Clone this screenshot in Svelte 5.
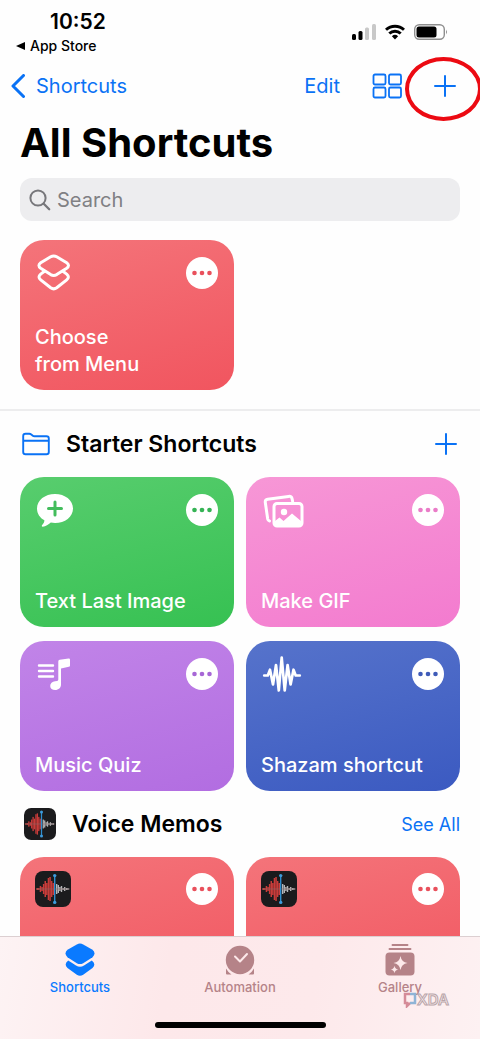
<script lang="ts">
    type Shortcut = { name: string; icon: string; color: string };

    const recent: Shortcut[] = [
        { name: "Choose\nfrom Menu", icon: "layers", color: "red" },
    ];

    const starters: Shortcut[] = [
        { name: "Text Last Image", icon: "bubble", color: "green" },
        { name: "Make GIF", icon: "photos", color: "pink" },
        { name: "Music Quiz", icon: "music", color: "purple" },
        { name: "Shazam shortcut", icon: "wave", color: "blue" },
    ];

    const memos: Shortcut[] = [
        { name: "", icon: "memo", color: "red" },
        { name: "", icon: "memo", color: "red" },
    ];

    // half heights of the recording bars, left to right
    const PLAYED = [1, 1, 3, 2, 5, 8, 6, 11, 12, 8, 6];
    const UNPLAYED = [5, 4, 2, 3, 1, 2, 1, 1];

    let search = $state("");
</script>

{#snippet memoIcon(size: number)}
    <svg width={size} height={size} viewBox="0 0 36 36" aria-hidden="true">
        <rect width="36" height="36" rx="8" fill="#1b1b1d" />
        {#each PLAYED as h, i}
            <rect x={1.5 + i * 1.6} y={18 - h} width="1.5" height={h * 2} fill="#c93c3a" />
        {/each}
        {#each UNPLAYED as h, i}
            <rect x={21 + i * 1.6} y={18 - h} width="1.4" height={h * 2} fill="#b5b5b7" />
        {/each}
        <path d="M1 18h34" stroke="#8c6a6a" stroke-width="0.6" />
        <path d="M19.7 4.5v27" stroke="#2f8fd0" stroke-width="1.4" />
        <circle cx="19.7" cy="4.6" r="1.7" fill="#3d9bdc" />
        <circle cx="19.7" cy="31.4" r="1.7" fill="#3d9bdc" />
    </svg>
{/snippet}

{#snippet plusIcon()}
    <svg width="22" height="22" viewBox="0 0 22 22" fill="none" stroke="currentColor" stroke-width="2" stroke-linecap="round" aria-hidden="true">
        <path d="M11 1v20M1 11h20" />
    </svg>
{/snippet}

{#snippet card(item: Shortcut)}
    <article class="card {item.color}">
        <div class="card-top">
            {#if item.icon === "memo"}
                {@render memoIcon(36)}
            {:else}
                <svg width="44" height="38" viewBox="0 0 44 38" fill="none" aria-hidden="true">
                    {#if item.icon === "layers"}
                        <g stroke="#fff" stroke-width="3" stroke-linejoin="round" stroke-linecap="round">
                            <path d="M15.700 2.800q3-1.700 6 0l10 6q3.600 2.700 0 5.400l-10 6.400q-3 1.700-6 0l-10-6.400q-3.600-2.700 0-5.400z" />
                            <path d="M9.500 17.300l-3.800 2.800q-3.400 3 0 5.800l10 7.900q3 2.200 6 0l10-7.900q3.400-2.800 0-5.800l-3.800-2.800" />
                        </g>
                    {:else if item.icon === "bubble"}
                        <path d="M20 3c10 0 18 6.200 18 14.400S30 32 20 32c-1.500 0-2.900-.1-4.200-.4-2.400 2.200-5.100 4-8 4.100-1.200 0-1.300-1-.6-1.700 1.400-1.500 2.200-3 2.200-4.700C4.900 26.700 2 22.500 2 17.400 2 9.200 10 3 20 3z" fill="#fff" />
                        <path d="M20 11v13M13.500 17.500h13" stroke="#43bd5c" stroke-width="3" stroke-linecap="round" />
                    {:else if item.icon === "photos"}
                        <path d="M8.500 30q-1.500-.3-1.800-2L4.300 11.500q-.4-2.800 2.400-3.200L27.500 5.400q3-.4 3.600 2.400l.5 2.500" stroke="#fff" stroke-width="3" stroke-linecap="round" />
                        <rect x="13" y="12.500" width="28" height="22.500" rx="3" stroke="#fff" stroke-width="3" />
                        <circle cx="23" cy="21" r="3.200" fill="#fff" />
                        <path d="M14 30l4.500-3.500 4 3.500 8.500-7.500 9 7.500v5H14z" fill="#fff" />
                    {:else if item.icon === "music"}
                        <path d="M4 10.500h14M4 16h14M4 21.500h14" stroke="#fff" stroke-width="2.400" stroke-linecap="round" />
                        <path d="M23.300 6.600q0-1.500 1.400-1.800L33.600 3.600q1.400-.2 1.400 1.200v5.600q0 1.200-1.200 1.400l-7.800 1.700V29.500c0 3.200-2.400 5.500-5.800 5.500-3 0-5-1.700-5-4.100 0-2.600 2-4.200 4.900-4.700l2-.3q1.200-.2 1.200-1.400z" fill="#fff" />
                    {:else if item.icon === "wave"}
                        <path d="M3.200 20.500h3.600L9 14.700 12 29.500 15 10l2.800 25.500L20.700 2.500l3 33L26.600 10l3 19.500 2.900-14.800 2.200 5.800h4.100" stroke="#fff" stroke-width="2.700" stroke-linejoin="round" stroke-linecap="round" />
                    {/if}
                </svg>
            {/if}
            <button class="more" aria-label="Edit shortcut">
                <svg width="20" height="6" viewBox="0 0 20 6" fill="currentColor" aria-hidden="true">
                    <circle cx="2.500" cy="3" r="2.300" />
                    <circle cx="10" cy="3" r="2.300" />
                    <circle cx="17.500" cy="3" r="2.300" />
                </svg>
            </button>
        </div>
        <p>{item.name}</p>
    </article>
{/snippet}

<header>
    <div class="status">
        <div class="clock">
            <time>10:52</time>
            <a href="#store">
                <svg width="9" height="8" viewBox="0 0 9 8" aria-hidden="true"><path d="M0 4l9-4v8z" /></svg>
                App Store
            </a>
        </div>
        <div class="signals">
            <svg width="24" height="16" viewBox="0 0 24 16" aria-hidden="true">
                <rect y="10" width="4" height="6" rx="1.500" />
                <rect x="6.500" y="7" width="4" height="9" rx="1.500" />
                <rect x="13" y="3.500" width="4" height="12.500" rx="1.500" fill="#c8c8c8" />
                <rect x="20" width="4" height="16" rx="1.500" fill="#c8c8c8" />
            </svg>
            <svg width="20" height="16" viewBox="0 0 20 16" fill="none" stroke="#000" stroke-width="2.900" aria-hidden="true">
                <path d="M1 5.800a13 13 0 0 1 18 0M4.300 9.500a8.200 8.200 0 0 1 11.400 0" />
                <path d="M10 15.500l-3.100-3.200a4.500 4.500 0 0 1 6.200 0z" fill="#000" stroke="none" />
            </svg>
            <svg width="34" height="16" viewBox="0 0 34 16" aria-hidden="true">
                <rect x="0.700" y="0.700" width="29.600" height="14.600" rx="4.500" fill="none" stroke="#8e8e8e" stroke-width="1.400" />
                <rect x="2.500" y="2.500" width="20" height="11" rx="2.500" />
                <path d="M32 5.500q1.800 2.500 0 5z" fill="#777" />
            </svg>
        </div>
    </div>

    <nav class="toolbar">
        <a class="back" href="#shortcuts">
            <svg width="14" height="24" viewBox="0 0 14 24" fill="none" stroke="currentColor" stroke-width="3" stroke-linecap="round" stroke-linejoin="round" aria-hidden="true">
                <path d="M12.500 1.500L2 12l10.500 10.500" />
            </svg>
            Shortcuts
        </a>
        <button class="edit">Edit</button>
        <button aria-label="Change layout">
            <svg width="30" height="26" viewBox="0 0 30 26" fill="none" stroke="currentColor" stroke-width="1.800" aria-hidden="true">
                <rect x="1.500" y="1.500" width="12" height="10" rx="1.500" />
                <rect x="17" y="1.500" width="12" height="10" rx="1.500" />
                <rect x="1.500" y="14.500" width="12" height="10" rx="1.500" />
                <rect x="17" y="14.500" width="12" height="10" rx="1.500" />
            </svg>
        </button>
        <button class="add" aria-label="New shortcut">
            {@render plusIcon()}
            <span class="ring"></span>
        </button>
    </nav>
</header>

<main>
    <h1>All Shortcuts</h1>

    <label class="search">
        <svg width="22" height="22" viewBox="0 0 22 22" fill="none" stroke="currentColor" stroke-width="2" stroke-linecap="round" aria-hidden="true">
            <circle cx="9" cy="9" r="7.600" />
            <path d="M14.700 14.700l5.500 5.500" stroke-width="2.300" />
        </svg>
        <input type="text" placeholder="Search" aria-label="Search" bind:value={search} />
    </label>

    <div class="grid">
        {#each recent as item}
            {@render card(item)}
        {/each}
    </div>

    <hr />

    <section>
        <div class="heading">
            <svg width="28" height="24" viewBox="0 0 28 24" fill="none" stroke="#0a72f5" stroke-width="1.900" stroke-linejoin="round" aria-hidden="true">
                <path d="M1.200 20V4q0-2.300 2.300-2.300h3.800q1.100 0 2 .8l1.200 1q.9.800 2 .8h12q2.300 0 2.300 2.300V20q0 2.300-2.300 2.300h-21Q1.200 22.300 1.200 20zM1.200 8.700h25.600" />
            </svg>
            <h2>Starter Shortcuts</h2>
            <button class="section-add" aria-label="Add to Starter Shortcuts">{@render plusIcon()}</button>
        </div>
        <div class="grid">
            {#each starters as item}
                {@render card(item)}
            {/each}
        </div>
    </section>

    <section>
        <div class="heading app">
            {@render memoIcon(32)}
            <h2>Voice Memos</h2>
            <a href="#all">See All</a>
        </div>
        <div class="grid">
            {#each memos as item}
                {@render card(item)}
            {/each}
        </div>
    </section>
</main>

<footer>
    <nav class="tabs">
        <a class="active" href="#shortcuts">
            <svg width="30" height="34" viewBox="0 0 30 34" fill="currentColor" aria-hidden="true">
                <path d="M11.800 1.400q3.200-1.800 6.400 0l9.300 5.400q4 3.700 0 7.400l-9.300 6q-3.200 1.800-6.400 0l-9.300-6q-4-3.700 0-7.400z" />
                <path d="M3.200 17.600l7.800 5q4 2.400 8 0l7.800-5q4.700 3.600.7 7.300l-9.300 6.800q-3.200 2.200-6.400 0l-9.300-6.800q-4-3.700.7-7.300z" />
            </svg>
            Shortcuts
        </a>
        <a href="#automation">
            <svg width="30" height="34" viewBox="0 0 30 34" fill="currentColor" aria-hidden="true">
                <circle cx="15" cy="17" r="14.200" />
                <path d="M10 13.500l5 5 7-7.500" fill="none" stroke="#fde9ea" stroke-width="2" stroke-linecap="round" stroke-linejoin="round" />
                <path d="M1 25.500q2 3.700 5.500 6H2q-1 0-1-1zM29 25.500q-2 3.700-5.500 6H28q1 0 1-1z" />
            </svg>
            Automation
        </a>
        <a href="#gallery">
            <svg width="30" height="34" viewBox="0 0 30 34" fill="currentColor" aria-hidden="true">
                <path d="M7.500 2h15M4.500 6h21" stroke="currentColor" stroke-width="1.900" stroke-linecap="round" />
                <rect x="0.500" y="9.500" width="29" height="23" rx="4" />
                <path d="M15.500 13q.9 6.100 7 7-6.100.9-7 7-.9-6.100-7-7 6.100-.9 7-7zM9.500 22.700q.5 3.300 3.800 3.800-3.300.5-3.800 3.800-.5-3.300-3.800-3.800 3.300-.5 3.800-3.800z" fill="#fde9ea" />
            </svg>
            Gallery
        </a>
    </nav>
    <div class="home"></div>
    <div class="watermark">
        <svg width="14" height="16" viewBox="0 0 14 16" fill="none" stroke-width="2.500" aria-hidden="true">
            <path d="M7 2H2v9h2v3l3-3" stroke="#d58b98" />
            <path d="M7 2h5v9H7" stroke="#8fb4d6" />
        </svg>
        XDA
    </div>
</footer>

<style>
    :global(body) {
        margin: 0;
        background: #fefefe;
        color: #000;
        font-family: Inter, "Liberation Sans", sans-serif;
    }

    button {
        display: flex;
        align-items: center;
        justify-content: center;
        padding: 0;
        border: 0;
        background: none;
        color: #0a72f5;
        font: inherit;
        cursor: pointer;
    }

    a {
        color: #0a72f5;
        text-decoration: none;
    }

    svg {
        flex: none;
    }

    .status {
        display: flex;
        justify-content: space-between;
        padding: 10px 32px 8px 16px;
    }

    .clock {
        display: flex;
        flex-direction: column;
        gap: 2px;
    }

    time {
        padding-left: 34px;
        font-size: 21px;
        font-weight: 600;
        line-height: 24px;
    }

    .clock a {
        display: flex;
        align-items: center;
        gap: 5px;
        color: #000;
        font-size: 14px;
        font-weight: 500;
        line-height: 20px;
    }

    .signals {
        display: flex;
        align-items: center;
        gap: 9px;
        height: 44px;
    }

    .toolbar {
        display: flex;
        align-items: center;
        height: 44px;
        padding: 0 20px 0 11px;
        font-size: 20px;
    }

    .back {
        display: flex;
        align-items: center;
        gap: 11px;
        margin-right: auto;
    }

    .edit {
        margin-right: 32px;
    }

    .add {
        position: relative;
        width: 30px;
        height: 30px;
        margin-left: 28px;
    }

    .ring {
        position: absolute;
        top: -14px;
        left: -25px;
        box-sizing: border-box;
        width: 77px;
        height: 64px;
        border: 4px solid #ec0a12;
        border-radius: 50%;
    }

    h1 {
        margin: 0;
        padding: 10px 20px;
        font-size: 40px;
        font-weight: 700;
        line-height: 50px;
    }

    .search {
        display: flex;
        align-items: center;
        gap: 6px;
        height: 43px;
        margin: 0 20px 19px;
        padding: 0 9px;
        border-radius: 12px;
        background: #ededef;
        color: #77777b;
    }

    input {
        flex: 1;
        min-width: 0;
        padding: 0;
        border: 0;
        outline: 0;
        background: none;
        color: #000;
        font: inherit;
        font-size: 20px;
    }

    input::placeholder {
        color: #808084;
        opacity: 1;
    }

    hr {
        height: 2px;
        margin: 19px 0 0;
        border: 0;
        background: #ededee;
    }

    .grid {
        display: grid;
        grid-template-columns: 1fr 1fr;
        gap: 14px 12px;
        padding: 0 20px;
    }

    .card {
        display: flex;
        flex-direction: column;
        justify-content: space-between;
        box-sizing: border-box;
        height: 150px;
        padding: 14px 16px 12px 15px;
        border-radius: 24px;
        color: #fff;
    }

    .card-top {
        display: flex;
        align-items: center;
        justify-content: space-between;
    }

    .card p {
        margin: 0;
        font-size: 20px;
        font-weight: 500;
        line-height: 27px;
        white-space: pre-line;
    }

    .more {
        width: 32px;
        height: 32px;
        border-radius: 50%;
        background: #fff;
    }

    .red {
        background: linear-gradient(165deg, #f4747a, #f1555f);
    }

    .green {
        background: linear-gradient(165deg, #58cd6e, #36c152);
    }

    .pink {
        background: linear-gradient(165deg, #f797d6, #f37bcf);
    }

    .purple {
        background: linear-gradient(165deg, #c184e8, #b26de1);
    }

    .blue {
        background: linear-gradient(165deg, #5673cb, #3b5ac1);
    }

    .red .more {
        color: #e9505c;
    }

    .green .more {
        color: #35b355;
    }

    .pink .more {
        color: #ea7cc8;
    }

    .purple .more {
        color: #a767d6;
    }

    .blue .more {
        color: #3f5bb8;
    }

    .heading {
        display: flex;
        align-items: center;
        gap: 16px;
        height: 66px;
        padding: 0 20px 0 22px;
    }

    .heading.app {
        padding-left: 24px;
    }

    h2 {
        flex: 1;
        margin: 0;
        font-size: 23px;
        font-weight: 600;
    }

    .heading a {
        font-size: 18px;
    }

    .section-add {
        width: 28px;
        height: 28px;
    }

    footer {
        position: fixed;
        right: 0;
        bottom: 0;
        left: 0;
        padding-bottom: 11px;
        border-top: 1px solid #dccfd1;
        background: linear-gradient(100deg, #fdf3f4, #fde8ea 35%, #fde9eb 65%, #fdf1f2);
    }

    .tabs {
        display: grid;
        grid-template-columns: 1fr 1fr 1fr;
        padding: 6px 0 27px;
    }

    .tabs a {
        display: flex;
        flex-direction: column;
        align-items: center;
        gap: 2px;
        color: #b58388;
        font-size: 13px;
        font-weight: 500;
        line-height: 16px;
    }

    .tabs .active {
        color: #0a7aff;
    }

    .home {
        width: 171px;
        height: 6px;
        margin: 0 auto;
        border-radius: 3px;
        background: #000;
    }

    .watermark {
        position: absolute;
        right: 31px;
        bottom: 31px;
        display: flex;
        align-items: center;
        color: #fbeff0;
        font-size: 15px;
        font-weight: 600;
        line-height: 16px;
        -webkit-text-stroke: 1px #b9a5a9;
    }
</style>
